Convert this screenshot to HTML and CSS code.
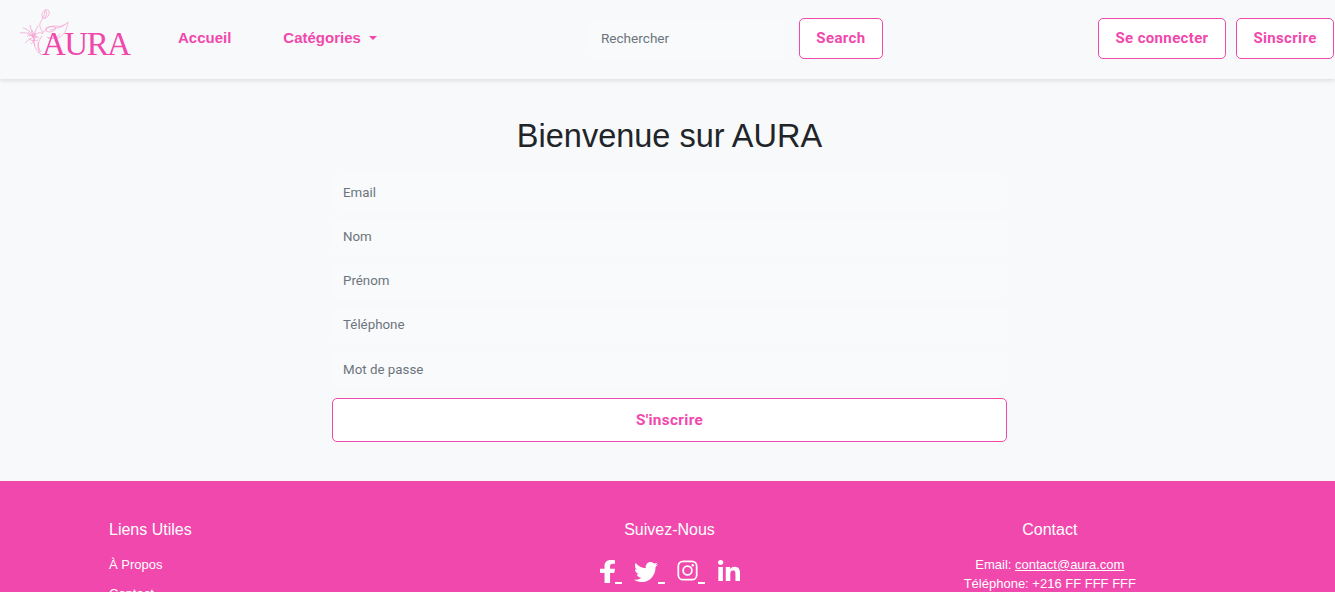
FILE: index.html
```html
<!DOCTYPE html>
<html lang="fr">
<head>
  <meta charset="UTF-8" />
  <meta name="viewport" content="width=device-width, initial-scale=1.0"/>
  <title>AURA</title>
  <link rel="stylesheet" href="styles.css">
</head>
<body>
  <nav class="navbar">
    <a class="logo" href="#">
      <svg class="logo-flower" viewBox="0 0 60 54" width="60" height="54" fill="none" stroke="#f39bd0" stroke-width="0.7">
        <path d="M25 10c-2-3-1-6 2-8 3-1 5 1 4 4-1 3-3 5-6 4z"/>
        <path d="M27 2c0 3-1 6-2 8M28 3c1 2 1 4-1 7M25 10c-2 3-4 6-3 9 1 3 3 4 2 7"/>
        <path d="M24 26c3-5 8-8 13-8 5 1 9 0 13-4-1 6-3 12-8 15-4 2-9 2-13 0"/>
        <path d="M28 20c3-2 7-2 10 0-2 4-7 5-10 3zM38 20c3 0 6-1 9-4M32 22c3 0 5-1 6-2"/>
        <path d="M2 25c4-1 9 0 13 4M5 20c4 1 8 4 11 9M7 35c3-3 6-5 9-6M12 17c1 4 2 8 3 12M17 38c-1-3-2-6-1-9"/>
        <path d="M11 31c3 2 5 2 9 1M15 29c3-3 6-5 8-4M20 18c-2 3-4 7-4 11M10 24c2 3 6 5 9 5M14 22c1 4 4 7 7 8M9 28c3 0 7-1 9-3M13 36c2-2 4-5 5-7"/>
        <path d="M24 28c-4 5-6 12-1 19M30 30c5 1 9-1 12-4M16 29c-1 6 1 12 5 16M20 34c0 4 1 8 3 10"/>
      </svg>
      <span class="logo-text">AURA</span>
    </a>
    <ul class="nav-links">
      <li><a href="#">Accueil</a></li>
      <li><a href="#">Catégories<span class="caret"></span></a></li>
    </ul>
    <form class="search-form">
      <input type="text" placeholder="Rechercher">
      <button type="button" class="btn btn-search">Search</button>
    </form>
    <div class="auth-buttons">
      <button type="button" class="btn btn-login">Se connecter</button>
      <button type="button" class="btn btn-signup">Sinscrire</button>
    </div>
  </nav>

  <main class="signup">
    <h2>Bienvenue sur AURA</h2>
    <form class="signup-form">
      <input type="email" placeholder="Email">
      <input type="text" placeholder="Nom">
      <input type="text" placeholder="Prénom">
      <input type="tel" placeholder="Téléphone">
      <input type="password" placeholder="Mot de passe">
      <button type="button" class="btn btn-submit">S'inscrire</button>
    </form>
  </main>

  <footer class="footer">
    <div class="footer-col footer-links">
      <h5>Liens Utiles</h5>
      <ul>
        <li><a href="#">À Propos</a></li>
        <li><a href="#">Contact</a></li>
      </ul>
    </div>
    <div class="footer-col">
      <h5>Suivez-Nous</h5>
      <div class="socials">
        <a href="#">
          <svg class="icon-f" viewBox="22 0 271 512" width="15" height="23" preserveAspectRatio="none" fill="#fff"><path d="M279 288l14-93h-89v-60c0-25 12-50 52-50h41V6S260 0 225 0c-73 0-121 44-121 125v70H22v93h82v224h100V288z"/></svg>
          <span class="social-dash"></span>
        </a>
        <a href="#">
          <svg class="icon-tw" viewBox="0 48 512 416" width="24" height="20" preserveAspectRatio="none" fill="#fff"><path d="M459 152c.3 4.500.3 9.100.3 13.600 0 138.700-105.600 298.600-298.600 298.600-59.500 0-114.700-17.200-161.100-47.100 8.400 1 16.600 1.300 25.300 1.300 49.100 0 94.200-16.600 130.300-44.800-46.100-1-84.800-31.200-98.100-72.800 6.500 1 13 1.600 19.800 1.600 9.400 0 18.800-1.300 27.600-3.600-48.100-9.700-84.100-52-84.100-103v-1.300c14 7.800 30.200 12.700 47.400 13.300-28.300-18.800-46.800-51-46.800-87.400 0-19.500 5.200-37.400 14.300-53 51.700 63.700 129.300 105.300 216.400 109.800-1.600-7.800-2.600-15.900-2.600-24 0-57.800 46.800-104.900 104.900-104.900 30.200 0 57.500 12.700 76.700 33.100 23.700-4.500 46.500-13.300 66.600-25.300-7.800 24-24.400 44.200-46.100 57.200 21.100-2.300 41.600-8.100 60.400-16.200-14.300 20.800-32.200 39.300-52.600 54.200z"/></svg>
          <span class="social-dash"></span>
        </a>
        <a href="#">
          <svg class="icon-ig" viewBox="0 0 24 24" width="21" height="21" fill="none" stroke="#fff" stroke-width="2"><rect x="1.500" y="1.500" width="21" height="21" rx="5.500"/><circle cx="12" cy="12" r="5"/><circle cx="18" cy="6" r="1.400" fill="#fff" stroke="none"/></svg>
          <span class="social-dash"></span>
        </a>
        <a class="social-last" href="#">
          <svg class="icon-in" viewBox="0 0 448 448" width="22" height="21" preserveAspectRatio="none" fill="#fff"><path d="M100 448H7V149h93zM54 108C24 108 0 83 0 54a54 54 0 0 1 108 0c0 29-24 54-54 54zm394 340h-93V302c0-35-1-79-48-79-48 0-56 38-56 77v148h-93V149h89v41h1c12-24 43-48 88-48 94 0 112 62 112 142z"/></svg>
        </a>
      </div>
    </div>
    <div class="footer-col">
      <h5>Contact</h5>
      <p>Email: <a class="mail" href="#">contact@aura.com</a></p>
      <p>Téléphone: +216 FF FFF FFF</p>
    </div>
  </footer>
</body>
</html>
```

FILE: styles.css
```css
* {
  box-sizing: border-box;
}

html, body {
  height: 100vh;
  overflow: hidden;
}

body {
  margin: 0;
  background-color: #f8f9fa;
  color: #212529;
  font-family: 'Liberation Sans', Arial, sans-serif;
}

a {
  text-decoration: none;
}

/* navbar */
.navbar {
  display: flex;
  align-items: center;
  height: 79px;
  padding: 0 1px 2px 18px;
  background-color: #f8f9fa;
  box-shadow: 0 2px 4px rgba(0, 0, 0, 0.1);
}

.logo {
  display: flex;
  align-items: flex-end;
  align-self: flex-start;
  width: 112px;
  height: 54px;
  margin-top: 8px;
  color: #f048ad;
}

.logo-flower {
  flex: none;
}

.logo-text {
  margin-left: -36px;
  margin-bottom: -1px;
  font-family: 'Liberation Serif', serif;
  font-size: 33px;
  line-height: 38px;
  letter-spacing: -1.500px;
}

.nav-links {
  display: flex;
  gap: 52px;
  list-style: none;
  margin: -2px 0 0 48px;
  padding: 0;
}

.nav-links a {
  color: #f048ad;
  font-size: 15px;
  font-weight: 700;
}

.caret {
  display: inline-block;
  margin-left: 8px;
  vertical-align: 3px;
  border-top: 4px solid #f048ad;
  border-left: 4px solid transparent;
  border-right: 4px solid transparent;
}

.search-form {
  display: flex;
  align-items: center;
  gap: 14px;
  margin-left: 213px;
}

.search-form input {
  width: 195px;
  height: 41px;
  padding: 0 11px 2px;
  border: none;
  border-radius: 6px;
  background-color: #f9fafb;
  font-family: Roboto, sans-serif;
  font-size: 13.600px;
}

.btn {
  height: 41px;
  padding: 0 0 2px;
  border: 1px solid #f048ad;
  border-radius: 5px;
  background-color: #fff;
  color: #f048ad;
  font-family: Roboto, sans-serif;
  font-size: 15px;
  font-weight: 700;
  letter-spacing: 0.350px;
  white-space: nowrap;
  cursor: pointer;
}

.auth-buttons {
  display: flex;
  gap: 10px;
  margin-left: auto;
}

.btn-search {
  width: 84px;
}

.btn-login {
  width: 128px;
}

.btn-signup {
  width: 98px;
}

input::placeholder {
  color: #6c757d;
  opacity: 1;
}

/* signup form */
.signup {
  width: 675px;
  height: 402px;
  margin-left: 332px;
  padding-top: 37px;
}

.signup h2 {
  margin: 0 0 18px;
  font-size: 32.500px;
  font-weight: 400;
  line-height: 40px;
  text-align: center;
}

.signup-form {
  display: flex;
  flex-direction: column;
  gap: 8px;
}

.signup-form input {
  height: 36.250px;
  padding: 0 11px;
  border: none;
  border-radius: 6px;
  background-color: #f9fafb;
  font-family: Roboto, sans-serif;
  font-size: 13.333px;
}

.btn-submit {
  height: 44px;
  margin-top: 3px;
  padding-bottom: 0;
  font-size: 15.300px;
}

/* footer */
.footer {
  display: grid;
  grid-template-columns: 1fr 1fr 1fr;
  height: 160px;
  padding: 39px 95px 0 99px;
  background-color: #f048ad;
  color: #fff;
  font-size: 13px;
}

.footer a {
  color: #fff;
}

.footer-col {
  padding: 0 10px;
  text-align: center;
}

.footer-col:first-child {
  text-align: left;
}

.footer-col h5 {
  margin: 0 0 17px;
  font-size: 16px;
  font-weight: 400;
  line-height: 19px;
}

.footer-links ul {
  list-style: none;
  margin: 0;
  padding: 0;
}

.footer-links li {
  margin-bottom: 12px;
  line-height: 17px;
}

.footer-col p {
  margin: 0 0 2px;
  line-height: 17px;
}

.footer .mail {
  text-decoration: underline;
}

.socials {
  display: flex;
  justify-content: center;
  gap: 12px;
  margin-top: -13px;
  padding: 17px 0 0 2px;
}

.socials a {
  display: flex;
  align-items: flex-end;
  height: 24px;
}

.socials .social-last {
  margin-left: 1px;
}

.social-dash {
  width: 7px;
  height: 2px;
  background-color: #fff;
}

.icon-f {
  margin-bottom: 1px;
}

.icon-tw {
  margin-bottom: 2px;
}

.icon-ig,
.icon-in {
  margin-bottom: 3px;
}
```
